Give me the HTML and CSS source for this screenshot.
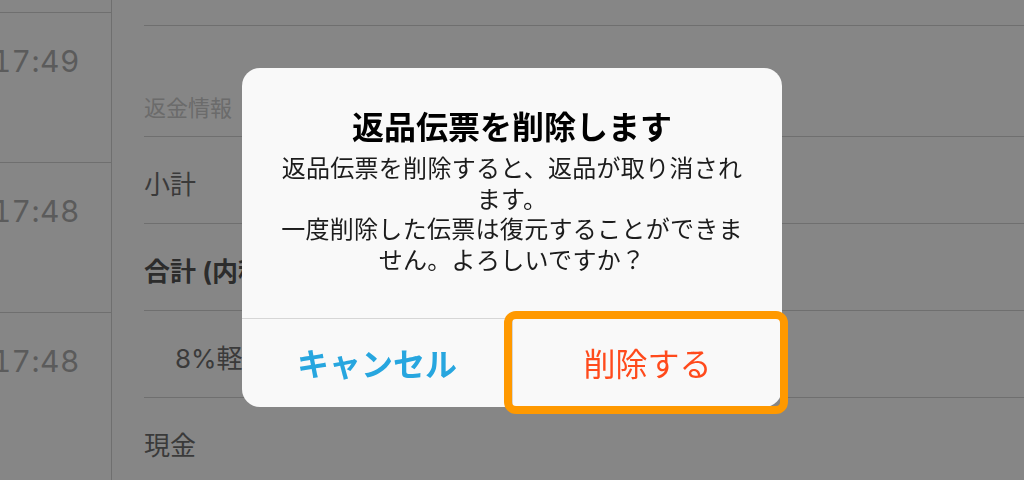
FILE: index.html
```html
<!DOCTYPE html>
<html lang="ja">
<head>
    <meta charset="UTF-8">
    <meta name="viewport" content="width=device-width, initial-scale=1.0">
    <title>返品伝票</title>
    <link rel="stylesheet" href="styles.css">
</head>
<body>
    <div class="screen">
        <aside class="history">
            <div class="history-stub"></div>
            <div class="history-row"><span class="time">17:49</span></div>
            <div class="history-row"><span class="time">17:48</span></div>
            <div class="history-row"><span class="time">17:48</span></div>
        </aside>

        <main class="detail">
            <div class="detail-stub"></div>
            <div class="section-header">返金情報</div>
            <div class="detail-row">小計</div>
            <div class="detail-row total">合計 (内税)</div>
            <div class="detail-row sub">8%軽減</div>
            <div class="detail-row">現金</div>
        </main>
    </div>

    <div class="backdrop">
        <div class="alert-wrap">
            <div class="alert">
                <div class="alert-body">
                    <h2 class="alert-title">返品伝票を削除します</h2>
                    <p class="alert-message">返品伝票を削除すると、返品が取り消されます。</p>
                    <p class="alert-message">一度削除した伝票は復元することができません。よろしいですか？</p>
                </div>
                <div class="alert-actions">
                    <button class="alert-button cancel">キャンセル</button>
                    <button class="alert-button destructive">削除する</button>
                </div>
            </div>
            <div class="highlight"></div>
        </div>
    </div>
</body>
</html>
```

FILE: styles.css
```css
body {
    margin: 0;
    background-color: #868686;
    font-family: Inter, "Noto Sans CJK JP", sans-serif;
    color: #3a3a3a;
}
.screen {
    display: flex;
    height: 480px;
    overflow: hidden;
}

/* left: history list */
.history {
    width: 112px;
    flex-shrink: 0;
    box-sizing: border-box;
    border-right: 1px solid #6f6f6f;
    overflow: hidden;
}
.history-stub {
    height: 13px;
    box-sizing: border-box;
    border-bottom: 1px solid #6f6f6f;
}
.history-row {
    display: flex;
    justify-content: flex-end;
    height: 150px;
    box-sizing: border-box;
    padding: 30px 31px 0 0;
    border-bottom: 1px solid #6f6f6f;
}
.history-row:last-child {
    border-bottom: none;
}
.time {
    font-size: 30px;
    line-height: 36px;
    font-variant-numeric: tabular-nums;
    letter-spacing: 0.5px;
    color: #5b5b5b;
    white-space: nowrap;
}

/* right: refund detail */
.detail {
    flex: 1;
}
.detail-stub,
.section-header,
.detail-row {
    margin-left: 32px;
    box-sizing: border-box;
    border-bottom: 1px solid #6f6f6f;
}
.detail-stub {
    height: 26px;
}
.section-header {
    display: flex;
    align-items: flex-end;
    height: 111px;
    padding-bottom: 13px;
    font-size: 22px;
    line-height: 30px;
    color: #6b6b6b;
}
.detail-row {
    display: flex;
    align-items: center;
    height: 87px;
    padding-top: 4px;
    font-size: 26px;
    white-space: nowrap;
}
.detail-row.total {
    font-weight: bold;
    color: #2c2c2c;
}
.detail-row.sub {
    padding-left: 31px;
}

/* alert */
.backdrop {
    position: fixed;
    inset: 0;
    display: flex;
    align-items: center;
    justify-content: center;
    padding-bottom: 5px;
}
.alert-wrap {
    position: relative;
}
.alert {
    width: 540px;
    background-color: #f9f9f9;
    border-radius: 18px;
    overflow: hidden;
}
.alert-body {
    padding: 40px 35px 42px;
    text-align: center;
}
.alert-title {
    margin: 0 0 6px;
    font-size: 32px;
    line-height: 40px;
    font-weight: bold;
    color: #000;
}
.alert-message {
    margin: 0;
    font-size: 24px;
    line-height: 30.5px;
    letter-spacing: 0.3px;
    color: #1c1c1c;
}
.alert-actions {
    display: grid;
    grid-template-columns: 1fr 1fr;
    border-top: 1px solid #d6d6d6;
}
.alert-button {
    height: 88px;
    padding: 0 0 2px;
    border: none;
    background: none;
    font-family: inherit;
    font-size: 32px;
}
.alert-button.cancel {
    color: #27a6df;
    font-weight: bold;
}
.alert-button.destructive {
    color: #ff4a1c;
    border-left: 1px solid #d6d6d6;
}
.highlight {
    position: absolute;
    right: -6px;
    bottom: -7px;
    width: 284px;
    height: 103px;
    box-sizing: border-box;
    border: 8px solid #ff9900;
    border-radius: 12px;
}
```
